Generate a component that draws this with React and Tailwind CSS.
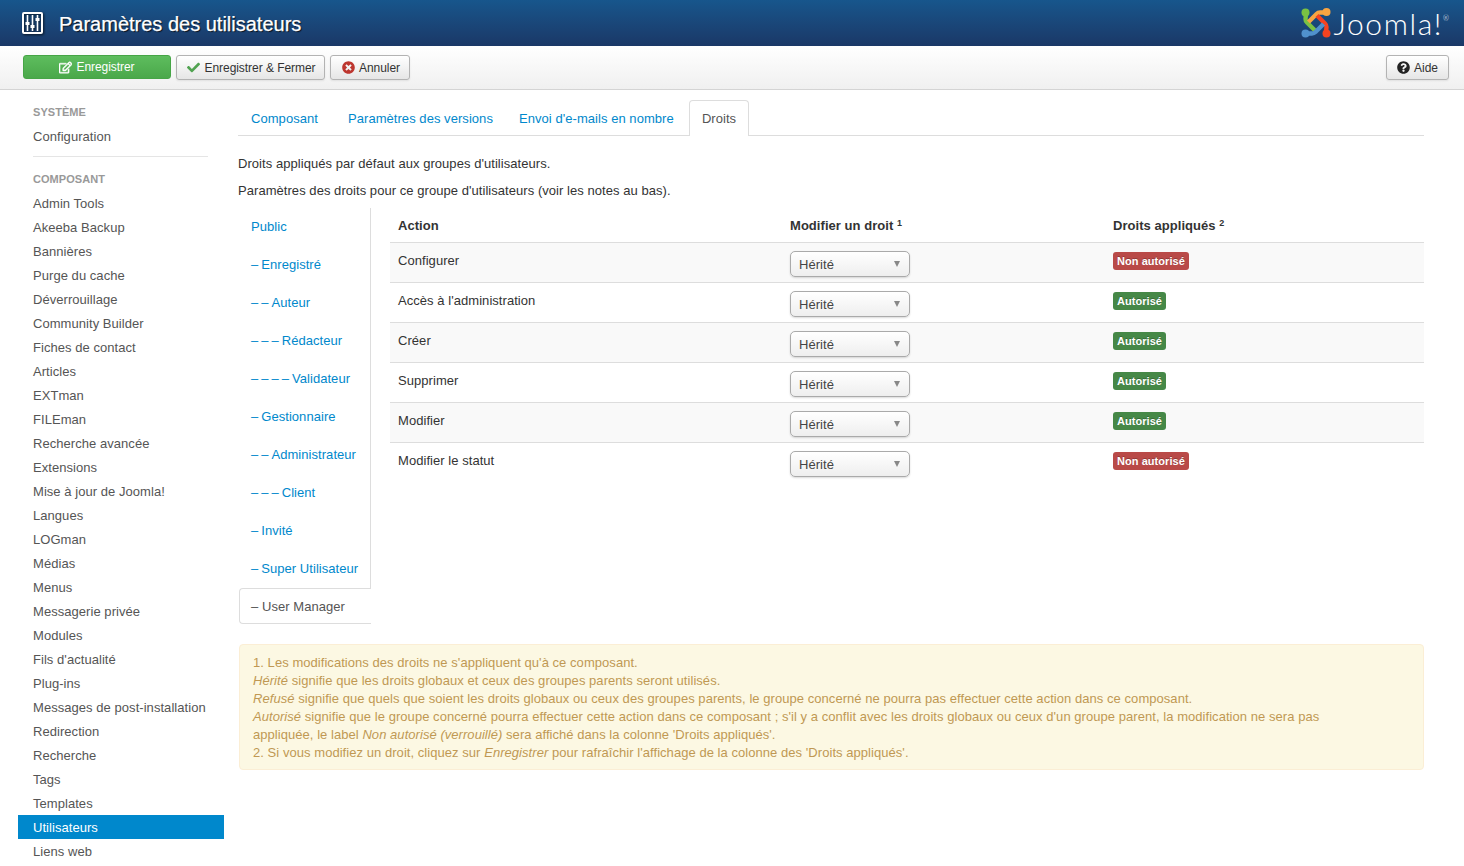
import { FaRegEdit, FaCheck, FaTimesCircle, FaQuestionCircle } from 'react-icons/fa';

const systemLinks = ['Configuration'];
const componentLinks = [
  'Admin Tools', 'Akeeba Backup', 'Bannières', 'Purge du cache', 'Déverrouillage', 'Community Builder',
  'Fiches de contact', 'Articles', 'EXTman', 'FILEman', 'Recherche avancée', 'Extensions',
  'Mise à jour de Joomla!', 'Langues', 'LOGman', 'Médias', 'Menus', 'Messagerie privée', 'Modules',
  "Fils d'actualité", 'Plug-ins', 'Messages de post-installation', 'Redirection', 'Recherche', 'Tags',
  'Templates', 'Utilisateurs', 'Liens web',
];
const groups = [
  ['', 'Public'], ['– ', 'Enregistré'], ['– – ', 'Auteur'], ['– – – ', 'Rédacteur'], ['– – – – ', 'Validateur'],
  ['– ', 'Gestionnaire'], ['– – ', 'Administrateur'], ['– – – ', 'Client'], ['– ', 'Invité'], ['– ', 'Super Utilisateur'],
];
const actions = [
  { name: 'Configurer', allowed: false },
  { name: "Accès à l'administration", allowed: true },
  { name: 'Créer', allowed: true },
  { name: 'Supprimer', allowed: true },
  { name: 'Modifier', allowed: true },
  { name: 'Modifier le statut', allowed: false },
];
const tabs = [
  { label: 'Composant', width: 'w-[97px]' },
  { label: 'Paramètres des versions', width: 'w-[171px]' },
  { label: "Envoi d'e-mails en nombre", width: 'w-[182px]' },
];

function SlidersIcon() {
  return (
    <svg width="21" height="22" viewBox="0 0 21 22" fill="none" className="drop-shadow-[1px_1px_1px_rgba(0,0,0,0.7)]">
      <rect x="1" y="1" width="19" height="20" rx="1" stroke="white" strokeWidth="2" />
      <path d="M5.5 3v16M10.5 3v16M15.5 3v16" stroke="white" strokeWidth="1.6" />
      <rect x="3.5" y="10" width="4" height="3" fill="white" />
      <rect x="8.5" y="13" width="4" height="3" fill="white" />
      <rect x="13.5" y="6" width="4" height="3" fill="white" />
    </svg>
  );
}

function JoomlaMark() {
  return (
    <svg width="30" height="30" viewBox="0 0 30 30" fill="none" strokeWidth="4.4">
      <path d="M5 6 L4.5 11 Q4.5 13 6 14.5 L14 22.5" stroke="#7ac143" />
      <circle cx="4.5" cy="4.5" r="4" fill="#7ac143" />
      <path d="M24 4.5 L19 4.5 Q17 4.5 15.5 6 L7.5 14" stroke="#f9a541" />
      <circle cx="25.5" cy="4" r="4" fill="#f9a541" />
      <path d="M25 24 L25.5 19 Q25.5 17 24 15.5 L16 7.5" stroke="#f44321" />
      <circle cx="25.5" cy="25.5" r="4" fill="#f44321" />
      <path d="M6 25.5 L11 25.5 Q13 25.5 14.5 24 L22.5 16" stroke="#5091cd" />
      <circle cx="4.5" cy="25.5" r="4" fill="#5091cd" />
    </svg>
  );
}

function ToolbarButton({ icon, label, className = '' }) {
  return (
    <button className={`flex h-[25px] items-center justify-center gap-1 rounded-[3px] border border-[#b3b3b3] bg-gradient-to-b from-white to-[#e6e6e6] text-[12px] tracking-[-0.05px] text-[#333] shadow-[0_1px_2px_rgba(0,0,0,0.08)] ${className}`}>
      {icon}
      {label}
    </button>
  );
}

function SideLink({ label }) {
  const active = label === 'Utilisateurs';
  return (
    <div className={`h-6 px-[15px] text-[13px] leading-[26px] ${active ? 'bg-[#0088cc] text-white' : 'text-[#555]'}`}>
      {label}
    </div>
  );
}

function RightsSelect() {
  return (
    <div className="flex h-[26px] w-[120px] items-center justify-between rounded-[5px] border border-[#aaa] bg-gradient-to-b from-white to-[#eee] pl-2 pr-[9px] text-[13px] text-[#444] shadow-[0_1px_2px_rgba(0,0,0,0.15)]">
      <span className="pt-[3px]">Hérité</span>
      <span className="border-x-[3.5px] border-t-[6px] border-x-transparent border-t-[#888]" />
    </div>
  );
}

export default function App() {
  return (
    <div className="h-[866px] overflow-hidden bg-white font-['Liberation_Sans',Arial,sans-serif] text-[13px] tracking-[0.05px] text-[#333]">
      <header className="flex h-[46px] items-center justify-between bg-gradient-to-b from-[#17568c] to-[#1a3867] pl-[22px] pr-[18px]">
        <div className="flex items-center gap-[16px]">
          <SlidersIcon />
          <h1 className="mt-px text-[20px] leading-6 tracking-normal text-white [-webkit-text-stroke:0.25px_white] [text-shadow:1px_1px_1px_rgba(0,0,0,0.8)]">Paramètres des utilisateurs</h1>
        </div>
        <div className="flex items-center gap-[3px]">
          <JoomlaMark />
          <span className="font-['Lato',sans-serif] text-[30px] leading-8 font-light tracking-[1.6px] text-white">
            Joomla!<sup className="inline-block w-[3px] align-super text-[7px] tracking-normal">®</sup>
          </span>
        </div>
      </header>

      <div className="flex h-[44px] items-start justify-between border-b border-[#d4d4d4] bg-gradient-to-b from-white to-[#f0f0f0] pl-[23px] pr-[15px] pt-[9px]">
        <div className="flex gap-[5px]">
          <button className="flex h-[24px] w-[148px] items-center justify-center gap-1 rounded-[3px] border border-[#46a546] bg-gradient-to-b from-[#5ebd5e] to-[#4aa84a] text-[12px] tracking-[-0.05px] text-white">
            <FaRegEdit className="stroke-white stroke-[20] text-[13px]" />
            Enregistrer
          </button>
          <ToolbarButton className="w-[149px] pl-[2px]" icon={<FaCheck className="text-[13px] text-[#51a351]" />} label="Enregistrer & Fermer" />
          <ToolbarButton className="w-[80px] pl-[2px]" icon={<FaTimesCircle className="text-[13px] text-[#bd362f]" />} label="Annuler" />
        </div>
        <ToolbarButton className="w-[63px]" icon={<FaQuestionCircle className="text-[13px] text-[#222]" />} label="Aide" />
      </div>

      <div className="flex">
        <aside className="ml-[18px] w-[206px] shrink-0 pt-[10px]">
          <div className="h-6 px-[15px] text-[11px] leading-6 font-bold text-[#999]">SYSTÈME</div>
          {systemLinks.map((label) => <SideLink key={label} label={label} />)}
          <div className="mx-[15px] mt-[8px] mb-[10px] w-[175px] border-t border-[#e5e5e5]" />
          <div className="h-6 px-[15px] text-[11px] leading-6 font-bold text-[#999]">COMPOSANT</div>
          {componentLinks.map((label) => <SideLink key={label} label={label} />)}
        </aside>

        <main className="ml-[14px] w-[1186px] pt-[10px]">
          <nav className="flex h-[36px] border-b border-[#ddd] pl-px">
            {tabs.map(({ label, width }) => (
              <span key={label} className={`pl-3 pt-[10px] text-[13px] leading-[18px] text-[#0088cc] ${width}`}>{label}</span>
            ))}
            <span className="-mb-px h-[36px] w-[60px] rounded-t-[4px] border border-b-0 border-[#ddd] bg-white pt-[9px] text-center text-[13px] leading-[18px] text-[#555]">Droits</span>
          </nav>

          <p className="mt-[19px] leading-[18px]">Droits appliqués par défaut aux groupes d'utilisateurs.</p>
          <p className="mt-[9px] leading-[18px]">Paramètres des droits pour ce groupe d'utilisateurs (voir les notes au bas).</p>

          <div className="mt-[8px] flex">
            <div className="ml-px w-[132px] shrink-0">
              <div className="border-r border-[#ddd]">
                {groups.map(([dashes, name]) => (
                  <div key={name} className="h-[38px] pl-3 text-[13px] leading-[38px] whitespace-nowrap text-[#0088cc]">
                    <span className="tracking-[-0.3px]">{dashes}</span>{name}
                  </div>
                ))}
              </div>
              <div className="h-[36px] rounded-l-[4px] border border-r-0 border-[#ddd] px-[11px] text-[13px] leading-[35px] text-[#555]">– User Manager</div>
            </div>

            <table className="ml-[19px] h-fit w-[1034px] table-fixed border-collapse text-left">
              <thead>
                <tr className="h-[34px]">
                  <th className="w-[400px] px-2 pt-[2px] font-bold">Action</th>
                  <th className="w-[323px] px-0 pt-[2px] font-bold">Modifier un droit <sup className="text-[9px]">1</sup></th>
                  <th className="px-0 pt-[2px] font-bold">Droits appliqués <sup className="text-[9px]">2</sup></th>
                </tr>
              </thead>
              <tbody>
                {actions.map(({ name, allowed }, i) => (
                  <tr key={name} className={`h-[40px] border-t border-[#ddd] align-top ${i % 2 === 0 ? 'bg-[#f9f9f9]' : ''}`}>
                    <td className="px-2 pt-[9px] leading-[18px]">{name}</td>
                    <td className="pt-2"><RightsSelect /></td>
                    <td className="pt-2">
                      <span className={`inline-block h-[18px] rounded-[3px] px-1 text-[11px] leading-[18px] font-bold text-white [text-shadow:0_-1px_0_rgba(0,0,0,0.25)] ${allowed ? 'bg-[#468847]' : 'bg-[#b94a48]'}`}>
                        {allowed ? 'Autorisé' : 'Non autorisé'}
                      </span>
                    </td>
                  </tr>
                ))}
              </tbody>
            </table>
          </div>

          <div className="mt-[20px] ml-px rounded-[4px] border border-[#fbeed5] bg-[#fcf8e3] pt-[9px] pr-[60px] pb-[7px] pl-[13px] text-[13px] leading-[18px] text-[#c09853]">
            <p>1. Les modifications des droits ne s'appliquent qu'à ce composant.</p>
            <p><em>Hérité</em> signifie que les droits globaux et ceux des groupes parents seront utilisés.</p>
            <p><em>Refusé</em> signifie que quels que soient les droits globaux ou ceux des groupes parents, le groupe concerné ne pourra pas effectuer cette action dans ce composant.</p>
            <p><em>Autorisé</em> signifie que le groupe concerné pourra effectuer cette action dans ce composant ; s'il y a conflit avec les droits globaux ou ceux d'un groupe parent, la modification ne sera pas appliquée, le label <em>Non autorisé (verrouillé)</em> sera affiché dans la colonne 'Droits appliqués'.</p>
            <p>2. Si vous modifiez un droit, cliquez sur <em>Enregistrer</em> pour rafraîchir l'affichage de la colonne des 'Droits appliqués'.</p>
          </div>
        </main>
      </div>
    </div>
  );
}
